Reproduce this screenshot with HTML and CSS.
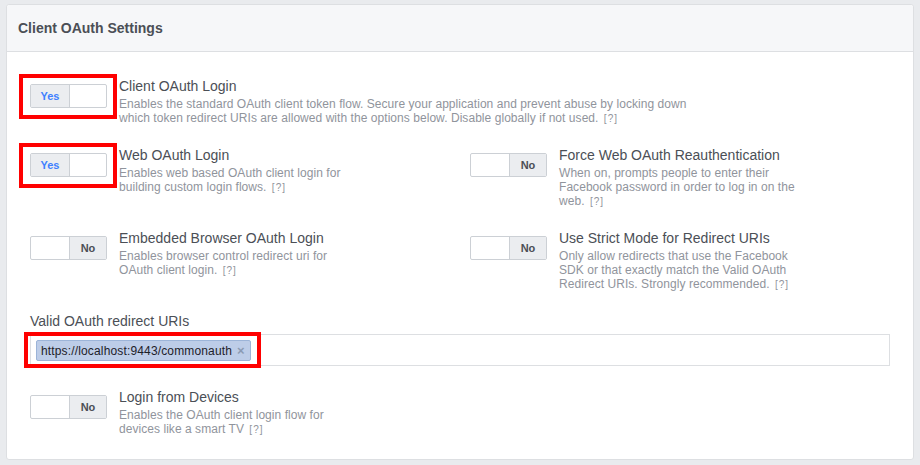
FILE: index.html
```html
<!DOCTYPE html>
<html>
<head>
<meta charset="utf-8">
<link rel="stylesheet" href="styles.css">
</head>
<body>
<div class="card">
  <div class="card-header">Client OAuth Settings</div>
  <div class="card-body">
    <div class="row full">
      <div class="setting">
        <div class="toggle-wrap highlight">
          <div class="toggle on"><span class="seg yes">Yes</span><span class="seg blank"></span></div>
        </div>
        <div class="info">
          <div class="title">Client OAuth Login</div>
          <div class="desc">Enables the standard OAuth client token flow. Secure your application and prevent abuse by locking down<br>which token redirect URIs are allowed with the options below. Disable globally if not used. <span class="help">[?]</span></div>
        </div>
      </div>
    </div>

    <div class="row grid">
      <div class="setting">
        <div class="toggle-wrap highlight">
          <div class="toggle on"><span class="seg yes">Yes</span><span class="seg blank"></span></div>
        </div>
        <div class="info">
          <div class="title">Web OAuth Login</div>
          <div class="desc">Enables web based OAuth client login for<br>building custom login flows. <span class="help">[?]</span></div>
        </div>
      </div>
      <div class="setting">
        <div class="toggle-wrap">
          <div class="toggle off"><span class="seg blank"></span><span class="seg no">No</span></div>
        </div>
        <div class="info">
          <div class="title">Force Web OAuth Reauthentication</div>
          <div class="desc">When on, prompts people to enter their<br>Facebook password in order to log in on the<br>web. <span class="help">[?]</span></div>
        </div>
      </div>
    </div>

    <div class="row grid">
      <div class="setting">
        <div class="toggle-wrap">
          <div class="toggle off"><span class="seg blank"></span><span class="seg no">No</span></div>
        </div>
        <div class="info">
          <div class="title">Embedded Browser OAuth Login</div>
          <div class="desc">Enables browser control redirect uri for<br>OAuth client login. <span class="help">[?]</span></div>
        </div>
      </div>
      <div class="setting">
        <div class="toggle-wrap">
          <div class="toggle off"><span class="seg blank"></span><span class="seg no">No</span></div>
        </div>
        <div class="info">
          <div class="title">Use Strict Mode for Redirect URIs</div>
          <div class="desc">Only allow redirects that use the Facebook<br>SDK or that exactly match the Valid OAuth<br>Redirect URIs. Strongly recommended. <span class="help">[?]</span></div>
        </div>
      </div>
    </div>

    <div class="row field">
      <div class="field-label">Valid OAuth redirect URIs</div>
      <div class="token-input">
        <span class="token-hl"><span class="token">https://localhost:9443/commonauth<span class="token-x">×</span></span></span>
      </div>
    </div>

    <div class="row full">
      <div class="setting">
        <div class="toggle-wrap">
          <div class="toggle off"><span class="seg blank"></span><span class="seg no">No</span></div>
        </div>
        <div class="info">
          <div class="title">Login from Devices</div>
          <div class="desc">Enables the OAuth client login flow for<br>devices like a smart TV <span class="help">[?]</span></div>
        </div>
      </div>
    </div>
  </div>
</div>
</body>
</html>
```

FILE: styles.css
```css
html, body {
  margin: 0;
  padding: 0;
}
body {
  background: #e9ebee;
  font-family: "Liberation Sans", Arial, Helvetica, sans-serif;
  color: #4b4f56;
  padding: 4px 6px 0 6px;
  width: 908px;
}
.card {
  background: #fff;
  border: 1px solid #dddfe2;
  border-radius: 3px;
  height: 454px;
}
.card-header {
  background: #f6f7f9;
  border-bottom: 1px solid #dddfe2;
  height: 46px;
  line-height: 46px;
  padding-left: 11px;
  font-size: 14px;
  font-weight: bold;
  color: #4b4f56;
  border-radius: 3px 3px 0 0;
}
.card-body {
  padding: 25px 23px 0 23px;
}
.row {
  margin-bottom: 20px;
}
.row.field {
  margin-bottom: 22px;
}
.grid {
  display: grid;
  grid-template-columns: 1fr 1fr;
  column-gap: 20px;
}
.setting {
  display: flex;
  align-items: flex-start;
}
.toggle-wrap {
  position: relative;
  width: 77px;
  margin-top: 7px;
  margin-right: 12px;
  flex: none;
}
.highlight::before {
  content: "";
  position: absolute;
  left: -11px;
  top: -10px;
  width: 90px;
  height: 37px;
  border: 4px solid #ff0000;
}
.toggle {
  position: relative;
  display: flex;
  width: 75px;
  height: 22px;
  border: 1px solid #ccd0d5;
  border-radius: 2px;
  background: #fff;
  overflow: hidden;
}
.seg {
  display: block;
  height: 22px;
  line-height: 22px;
  font-size: 11px;
  font-weight: bold;
  text-align: center;
}
.toggle.on .yes {
  width: 38px;
  background: #ebedf0;
  border-right: 1px solid #ccd0d5;
  color: #4080ff;
}
.toggle.on .blank {
  flex: 1;
}
.toggle.off .blank {
  width: 38px;
  border-right: 1px solid #ccd0d5;
}
.toggle.off .no {
  flex: 1;
  background: #ebedf0;
  color: #4b4f56;
}
.info {
  min-width: 0;
}
.title {
  font-size: 14px;
  line-height: 18px;
  color: #4b4f56;
}
.desc {
  margin-top: 2px;
  font-size: 12px;
  line-height: 14px;
  color: #90949c;
  white-space: nowrap;
  letter-spacing: 0.05px;
}
.help {
  font-size: 10px;
  letter-spacing: 1px;
  margin-left: 2px;
}
.field-label {
  font-size: 14px;
  line-height: 18px;
  margin-top: 1px;
  margin-bottom: 4px;
  color: #4b4f56;
}
.token-input {
  height: 30px;
  border: 1px solid #dddfe2;
  display: flex;
  align-items: center;
  padding-left: 5px;
}
.token-hl {
  position: relative;
  display: inline-block;
}
.token-hl::before {
  content: "";
  position: absolute;
  left: -12px;
  top: -8px;
  right: -10px;
  bottom: -7px;
  border: 4px solid #ff0000;
}
.token {
  display: inline-block;
  height: 19px;
  line-height: 19px;
  padding: 0 5px 0 4px;
  background: #bdcde8;
  border: 1px solid #9cb4d8;
  border-radius: 2px;
  font-size: 12px;
  letter-spacing: 0.15px;
  color: #1d2129;
}
.token-x {
  margin-left: 5px;
  color: #8b9bb4;
  font-size: 13px;
  font-weight: bold;
}
```
